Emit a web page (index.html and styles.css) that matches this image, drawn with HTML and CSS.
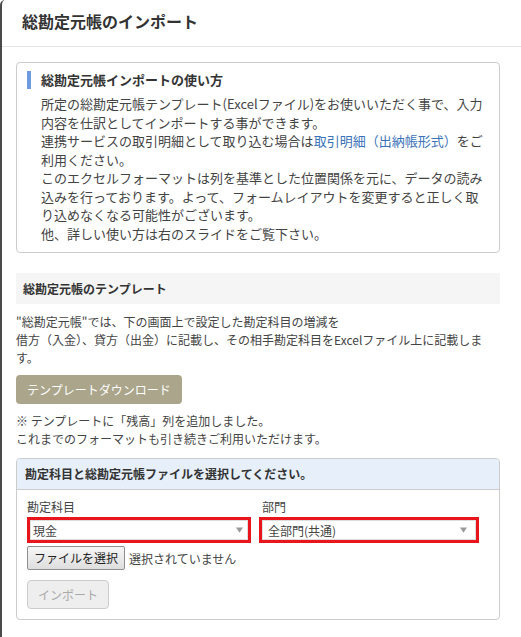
FILE: index.html
```html
<!DOCTYPE html>
<html lang="ja">
<head>
<meta charset="utf-8">
<title>総勘定元帳のインポート</title>
<link rel="stylesheet" href="styles.css">
</head>
<body>
<div class="modal">
  <div class="modal-header">
    <h1 class="modal-title">総勘定元帳のインポート</h1>
  </div>
  <div class="modal-body">
    <div class="info-box">
      <h2 class="info-title">総勘定元帳インポートの使い方</h2>
      <p class="info-text">所定の総勘定元帳テンプレート(Excelファイル)をお使いいただく事で、入力<br>内容を仕訳としてインポートする事ができます。<br>連携サービスの取引明細として取り込む場合は<a class="link" href="#">取引明細（出納帳形式）</a>をご<br>利用ください。<br>このエクセルフォーマットは列を基準とした位置関係を元に、データの読み<br>込みを行っております。よって、フォームレイアウトを変更すると正しく取<br>り込めなくなる可能性がございます。<br>他、詳しい使い方は右のスライドをご覧下さい。</p>
    </div>

    <h3 class="section-head">総勘定元帳のテンプレート</h3>
    <p class="desc">"総勘定元帳"では、下の画面上で設定した勘定科目の増減を<br>借方（入金）、貸方（出金）に記載し、その相手勘定科目をExcelファイル上に記載しま<br>す。</p>
    <button class="btn-download" type="button">テンプレートダウンロード</button>
    <p class="note">※ テンプレートに「残高」列を追加しました。<br>これまでのフォーマットも引き続きご利用いただけます。</p>

    <div class="panel">
      <div class="panel-head">勘定科目と総勘定元帳ファイルを選択してください。</div>
      <div class="panel-body">
        <div class="fields">
          <div class="field">
            <div class="label">勘定科目</div>
            <div class="select-wrap">
              <div class="select"><span>現金</span>
                <svg class="caret" width="8" height="6" viewBox="0 0 8 6"><polygon points="0,0 8,0 4,6" fill="#999"/></svg>
              </div>
            </div>
            <div class="file-row">
              <span class="file-btn">ファイルを選択</span>
              <span class="file-none">選択されていません</span>
            </div>
          </div>
          <div class="field field-right">
            <div class="label">部門</div>
            <div class="select-wrap">
              <div class="select select-right"><span>全部門(共通)</span>
                <svg class="caret" width="8" height="6" viewBox="0 0 8 6"><polygon points="0,0 8,0 4,6" fill="#999"/></svg>
              </div>
            </div>
          </div>
        </div>
        <button class="btn-import" type="button" disabled>インポート</button>
      </div>
    </div>
  </div>
</div>
</body>
</html>
```

FILE: styles.css
```css
* { box-sizing: border-box; }
html, body {
  margin: 0;
  padding: 0;
  background: #fff;
}
body {
  font-family: "Noto Sans CJK JP", "Noto Sans", sans-serif;
  color: #444;
  font-size: 13px;
}
.modal {
  border-left: 2px solid #4a4a4a;
  border-top-left-radius: 5px;
  min-height: 637px;
  background: #fff;
}
.modal-header {
  height: 47px;
  border-bottom: 1px solid #e5e5e5;
  padding: 0 0 0 20px;
  display: flex;
  align-items: center;
}
.modal-title {
  margin: 0;
  font-size: 16px;
  line-height: 20px;
  font-weight: bold;
  color: #333;
  position: relative;
  top: -2px;
}
.modal-body {
  padding: 15px 21px 0 14px;
}
.info-box {
  border: 1px solid #ccc;
  border-radius: 4px;
  padding: 8px 4px 9px 10px;
}
.info-title {
  margin: 0;
  font-size: 13px;
  line-height: 18px;
  font-weight: bold;
  color: #333;
  border-left: 4px solid #6f9be0;
  padding-left: 10px;
}
.info-text {
  margin: 6px 0 0 0;
  padding-left: 14px;
  font-size: 13px;
  line-height: 18.5px;
  color: #444;
  white-space: nowrap;
}
.link {
  color: #3a72b8;
  text-decoration: none;
}
.section-head {
  margin: 20px 0 0 0;
  background: #f5f5f5;
  height: 31px;
  padding: 0 7px;
  font-size: 12px;
  font-weight: bold;
  line-height: 31px;
  color: #333;
}
.desc {
  margin: 9px 0 0 0;
  font-size: 12px;
  line-height: 18px;
  color: #444;
  white-space: nowrap;
}
.btn-download {
  display: block;
  margin-top: 8px;
  height: 29px;
  padding: 0 11px;
  border: none;
  border-radius: 4px;
  background: #aaa58b;
  color: #fff;
  font-family: inherit;
  font-size: 12px;
  line-height: 29px;
}
.note {
  margin: 8px 0 0 0;
  font-size: 12px;
  line-height: 17.5px;
  color: #444;
}
.panel {
  margin-top: 11px;
  border: 1px solid #ccc;
  border-radius: 4px;
  overflow: hidden;
}
.panel-head {
  background: #e6effa;
  border-bottom: 1px solid #ccc;
  height: 31px;
  padding: 0 8px;
  font-size: 12px;
  font-weight: bold;
  line-height: 30px;
  color: #333;
}
.panel-body {
  padding: 8px 20px 10px 10px;
}
.fields {
  display: grid;
  grid-template-columns: 224px 220px;
  column-gap: 8px;
}
.label {
  font-size: 12px;
  line-height: 18px;
  color: #444;
  margin-bottom: 1px;
}
.field-right .label {
  padding-left: 3px;
}
.select-wrap {
  border: 3px solid #e8151d;
}
.select {
  height: 20px;
  border: 1px solid #ddd;
  background: #fff;
  display: flex;
  align-items: center;
  justify-content: space-between;
  padding: 0 4px 0 2px;
  font-size: 12px;
  color: #444;
}
.select-right {
  padding-left: 5px;
  padding-right: 8px;
}
.caret {
  display: block;
  width: 7px;
  height: 6px;
}
.file-row {
  margin-top: 3px;
  display: flex;
  align-items: center;
  gap: 4px;
}
.file-btn {
  display: inline-block;
  height: 24px;
  padding: 0 6px;
  border: 1px solid #8f8f8f;
  border-radius: 2px;
  background: linear-gradient(#f6f6f6, #dedede);
  font-size: 12px;
  line-height: 22px;
  color: #222;
}
.file-none {
  font-size: 12px;
  color: #444;
}
.btn-import {
  display: block;
  margin-top: 10px;
  width: 82px;
  height: 29px;
  border: 1px solid #ccc;
  border-radius: 4px;
  background: #eee;
  color: #aaa;
  font-family: inherit;
  font-size: 12px;
  line-height: 27px;
  padding: 0;
}
```
